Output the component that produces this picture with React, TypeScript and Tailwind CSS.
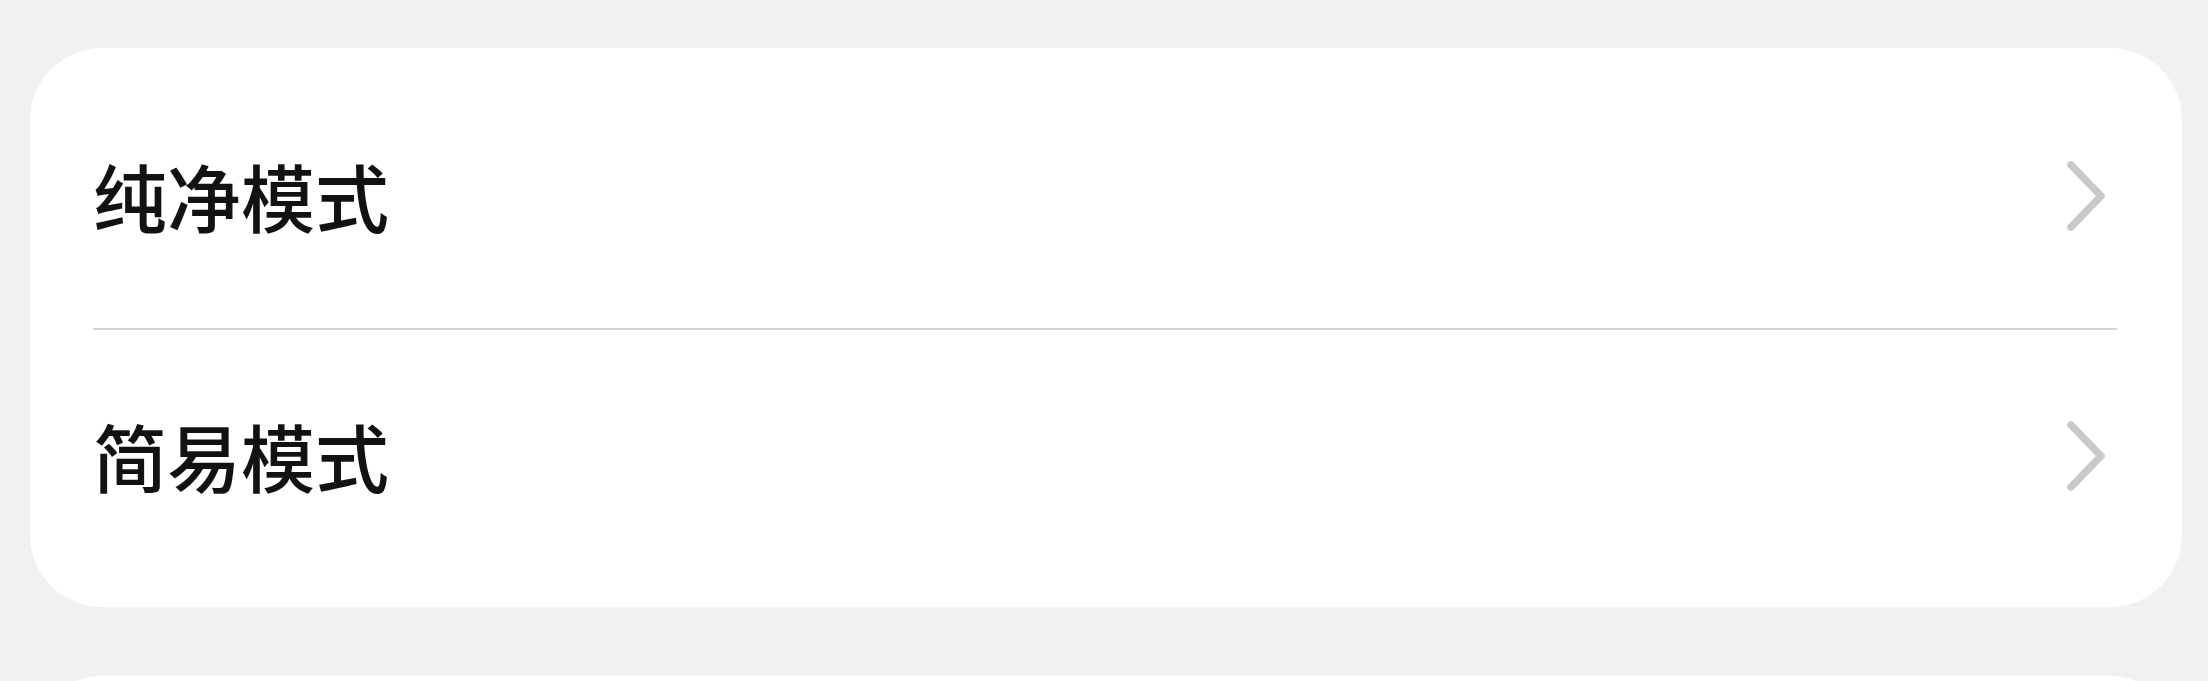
import React from "react";

function Chevron() {
  return (
    <svg width="44" height="76" viewBox="0 0 44 76" fill="none" className="shrink-0">
      <polyline
        points="6,8 36,39 6,70"
        stroke="#c9c9cc"
        strokeWidth="7.5"
        strokeLinecap="round"
        strokeLinejoin="round"
      />
    </svg>
  );
}

function Row({ label, className }: { label: string; className: string }) {
  return (
    <div className={`flex items-center justify-between pl-[63px] pr-[73px] ${className}`}>
      <span className="text-[74px] leading-none font-medium text-[#121212] font-['Noto_Sans_CJK_SC','Noto_Sans',sans-serif]">
        {label}
      </span>
      <Chevron />
    </div>
  );
}

export default function App() {
  return (
    <div className="h-[681px] w-full overflow-hidden bg-[#f1f1f3] pt-[48px] pl-[30px] pr-[26px]">
      <div className="rounded-[72px] bg-white">
        <Row label="纯净模式" className="h-[280px] pt-[14px]" />
        <div className="ml-[63px] mr-[65px] h-[2px] bg-[#d2d2d4]" />
        <Row label="简易模式" className="h-[277px] pb-[28px]" />
      </div>
      <div className="mt-[69px] h-[120px] rounded-t-[72px] bg-white" />
    </div>
  );
}
